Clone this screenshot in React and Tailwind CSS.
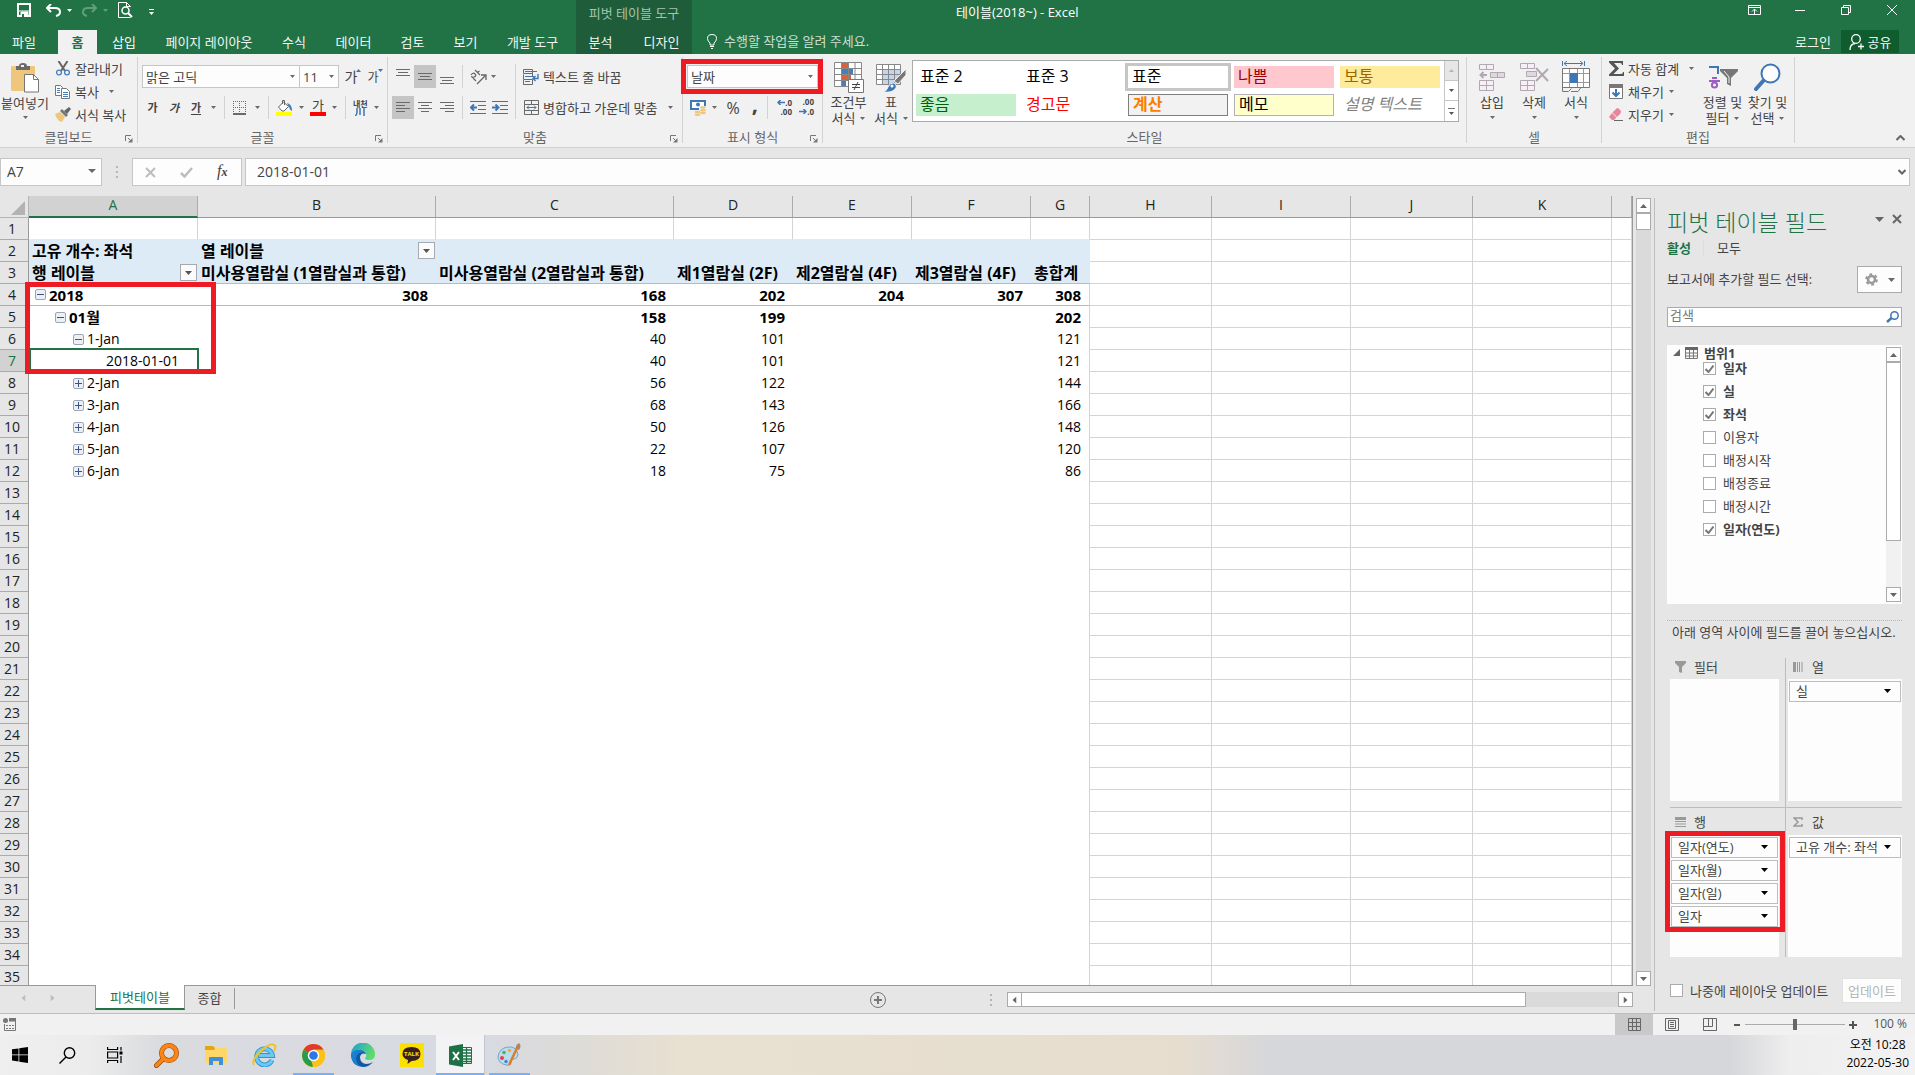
import React from 'react';
import clsx from 'clsx';

const columns = [
  { name: 'A', width: 'w-[169px]' },
  { name: 'B', width: 'w-[238px]' },
  { name: 'C', width: 'w-[238px]' },
  { name: 'D', width: 'w-[119px]' },
  { name: 'E', width: 'w-[119px]' },
  { name: 'F', width: 'w-[119px]' },
  { name: 'G', width: 'w-[59px]' },
  { name: 'H', width: 'w-[122px]' },
  { name: 'I', width: 'w-[139px]' },
  { name: 'J', width: 'w-[122px]' },
  { name: 'K', width: 'w-[139px]' },
  { name: '', width: '' }
];

const pivotRows = {
  4: { label: '2018', sign: '-', pad: 'pl-[6px]', bold: true, values: ['308', '168', '202', '204', '307', '308'] },
  5: { label: '01월', sign: '-', pad: 'pl-[26px]', bold: true, values: ['', '158', '199', '', '', '202'] },
  6: { label: '1-Jan', sign: '-', pad: 'pl-[44px]', values: ['', '40', '101', '', '', '121'] },
  7: { label: '2018-01-01', pad: 'pl-[77px]', values: ['', '40', '101', '', '', '121'] },
  8: { label: '2-Jan', sign: '+', pad: 'pl-[44px]', values: ['', '56', '122', '', '', '144'] },
  9: { label: '3-Jan', sign: '+', pad: 'pl-[44px]', values: ['', '68', '143', '', '', '166'] },
  10: { label: '4-Jan', sign: '+', pad: 'pl-[44px]', values: ['', '50', '126', '', '', '148'] },
  11: { label: '5-Jan', sign: '+', pad: 'pl-[44px]', values: ['', '22', '107', '', '', '120'] },
  12: { label: '6-Jan', sign: '+', pad: 'pl-[44px]', values: ['', '18', '75', '', '', '86'] }
};

const headerCells = {
  2: ['고유 개수: 좌석', '열 레이블', '', '', '', '', ''],
  3: [
    '행 레이블',
    '미사용열람실 (1열람실과 통합)',
    '미사용열람실 (2열람실과 통합)',
    '제1열람실 (2F)',
    '제2열람실 (4F)',
    '제3열람실 (4F)',
    '총합계'
  ]
};

const fields = [
  { name: '일자', checked: true },
  { name: '실', checked: true },
  { name: '좌석', checked: true },
  { name: '이용자', checked: false },
  { name: '배정시작', checked: false },
  { name: '배정종료', checked: false },
  { name: '배정시간', checked: false },
  { name: '일자(연도)', checked: true }
];

const tabs = [
  { name: '삽입', width: 'w-[54px]' },
  { name: '페이지 레이아웃', width: 'w-[116px]' },
  { name: '수식', width: 'w-[54px]' },
  { name: '데이터', width: 'w-[65px]' },
  { name: '검토', width: 'w-[53px]' },
  { name: '보기', width: 'w-[53px]' },
  { name: '개발 도구', width: 'w-[81px]' }
];

const cellStyles = [
  { name: '표준 2', style: 'text-black' },
  { name: '표준 3', style: 'text-black' },
  { name: '표준', style: 'text-black bg-white outline-3 outline-[#c6c6c6]' },
  { name: '나쁨', style: 'text-[#9c0006] bg-[#ffc7ce]' },
  { name: '보통', style: 'text-[#9c6500] bg-[#ffeb9c]' },
  { name: '좋음', style: 'text-[#006100] bg-[#c6efce]' },
  { name: '경고문', style: 'text-[#ff0000]' },
  { name: '계산', style: 'text-[#fa7d00] bg-[#f2f2f2] font-bold border border-[#7f7f7f]' },
  { name: '메모', style: 'text-black bg-[#ffffcc] border border-[#b2b2b2]' },
  { name: '설명 텍스트', style: 'text-[#7f7f7f] italic' }
];

/* ---------- small shared pieces ---------- */

function Caret({ size = 5, className = 'text-[#6a6a6a]' }) {
  return (
    <svg
      width={size}
      height={Math.ceil(size / 2)}
      viewBox="0 0 8 4"
      preserveAspectRatio="none"
      className={clsx('shrink-0', className)}
      fill="currentColor"
    >
      <path d="M0 0h8L4 4z" />
    </svg>
  );
}

function Divider() {
  return <div className="w-px self-stretch bg-[#d2d2d2]" />;
}

function Launcher() {
  return (
    <button aria-label="옵션" className="absolute right-1 bottom-0">
      <svg width="8" height="8" viewBox="0 0 8 8" stroke="#777" fill="none">
        <path d="M.5 6V.5H6M3 3l3 3" />
        <path d="M7.5 3v4.5H3z" fill="#777" stroke="none" />
      </svg>
    </button>
  );
}

function Group({ title, className, launcher, children }) {
  return (
    <section className={clsx('relative flex shrink-0 flex-col border-r border-[#d2d2d2]', className)}>
      <div className="flex h-[74px]">{children}</div>
      <div className="flex h-3 items-center justify-center text-[#666]">{title}</div>
      {launcher && <Launcher />}
    </section>
  );
}

function Combo({ label, value, className }) {
  return (
    <div className={clsx('relative h-[23px]', className)}>
      <select
        aria-label={label}
        className="block h-full w-full appearance-none border border-[#c6c6c6] bg-[#fdfdfd] pl-[3px] leading-5 text-[#444]"
      >
        <option>{value}</option>
      </select>
      <Caret className="pointer-events-none absolute top-[10px] right-[5px] text-[#6a6a6a]" />
    </div>
  );
}

function SmallButton({ icon, label, caret, gap = 'ml-[5px]' }) {
  return (
    <button className="flex h-[23px] items-center">
      <span className="mr-1 flex w-4 justify-center">{icon}</span>
      <span>{label}</span>
      {caret && <Caret className={clsx('text-[#6a6a6a]', gap)} />}
    </button>
  );
}

function BigButton({ icon, lines, className }) {
  return (
    <button className={clsx('flex flex-col items-center pt-[3px]', className)}>
      <span className="flex h-[34px] items-center">{icon}</span>
      <span className="leading-4 whitespace-nowrap">{lines[0]}</span>
      {lines[1] ? (
        <span className="flex items-center gap-[5px] leading-4 whitespace-nowrap">
          {lines[1]}
          <Caret />
        </span>
      ) : (
        <Caret className="mt-[6px] text-[#6a6a6a]" />
      )}
    </button>
  );
}

/* ---------- ribbon icons ---------- */

const PasteIcon = () => (
  <svg width="30" height="32" viewBox="0 0 30 32">
    <path d="M2 5h22q1 0 1 1v23q0 1-1 1H2q-1 0-1-1V6q0-1 1-1z" fill="#eec67c" />
    <path d="M6 9V5h3q0-3 4-3t4 3h3v4z" fill="#6a6a6a" />
    <rect x="11" y="4" width="3" height="2" fill="#f1f1f1" />
    <path d="M14.500 13.500h9l5 5v12.500h-14z" fill="#fff" stroke="#777" />
    <path d="M23.500 13.500v5h5" fill="none" stroke="#777" />
  </svg>
);

const CutIcon = () => (
  <svg width="14" height="15" viewBox="0 0 14 15" fill="none">
    <path d="M2.500 0l6.500 10M11.500 0L5 10" stroke="#666" strokeWidth="2" />
    <circle cx="3" cy="11.500" r="2.400" stroke="#4a7ebb" strokeWidth="1.300" />
    <circle cx="11" cy="11.500" r="2.400" stroke="#4a7ebb" strokeWidth="1.300" />
  </svg>
);

const CopyIcon = () => (
  <svg width="16" height="14" viewBox="0 0 16 14" fill="#fff" stroke="#777">
    <path d="M.5.5h5l2 2v8h-7z" />
    <path d="M6.500 3.500h5l3 3v7h-8z" />
    <path d="M2 3.500h3M2 5.500h3M2 7.500h3M8 7.500h5M8 9.500h5M8 11.500h5" stroke="#4a7ebb" />
  </svg>
);

const BrushIcon = () => (
  <svg width="16" height="15" viewBox="0 0 16 15">
    <path d="M0 7l5-2 5 5-3 5q-5-1-7-8z" fill="#eec67c" />
    <path d="M5 4l2-2 6 6-2 2z" fill="#777" />
    <path d="M9 4l5-4 2 2-4 5z" fill="#666" />
  </svg>
);

function LinesIcon({ rows }) {
  return (
    <svg width="14" height="16" viewBox="0 0 14 16" stroke="#6a6a6a">
      {rows.map(([x1, x2, y]) => (
        <path key={y} d={`M${x1} ${y}.5H${x2}`} />
      ))}
    </svg>
  );
}

const alignRows = {
  top: [[0, 14, 0], [2, 12, 3], [0, 14, 6]],
  middle: [[0, 14, 4], [2, 12, 7], [0, 14, 10]],
  bottom: [[0, 14, 8], [2, 12, 11], [0, 14, 14]],
  left: [[0, 14, 2], [0, 9, 5], [0, 14, 8], [0, 9, 11]],
  center: [[0, 14, 2], [3, 11, 5], [0, 14, 8], [3, 11, 11]],
  right: [[0, 14, 2], [5, 14, 5], [0, 14, 8], [5, 14, 11]]
};

function AlignButton({ kind, active }) {
  return (
    <button
      aria-label={kind}
      className={clsx('flex h-[23px] w-[22px] items-center justify-center', active && 'bg-[#c5c5c5]')}
    >
      <LinesIcon rows={alignRows[kind]} />
    </button>
  );
}

function IndentIcon({ flip }) {
  return (
    <svg width="16" height="14" viewBox="0 0 16 14" fill="none">
      <path d="M0 .5h16M8 4.500h8M8 8.500h8M0 12.500h16" stroke="#6a6a6a" />
      <path d={flip ? 'M0 6.500h6M3.500 3.500l3 3-3 3' : 'M7 6.500H1M4 3.500l-3 3 3 3'} stroke="#3f76b5" strokeWidth="2" />
    </svg>
  );
}

const OrientationIcon = () => (
  <svg width="17" height="16" viewBox="0 0 17 16" fill="none" stroke="#666">
    <path d="M1 6q2-3 4-1t-1 3-2-1M5 1l5 5M7.500 3.500L9.500 2M3 9l3 3" strokeWidth="1.200" />
    <path d="M7 15l8-8M11 6h5v5" strokeWidth="1.300" />
  </svg>
);

const WrapIcon = () => (
  <svg width="16" height="16" viewBox="0 0 16 16" fill="none">
    <path d="M.5.5h9v4h-9zM.5 10V5.500M.5 10.500h9v5h-9zM9.500 7V4" stroke="#6a6a6a" />
    <path d="M2 2.500h12M2 7.500h9M2 12.500h5" stroke="#3f76b5" />
    <path d="M15 5v4.500H10M12.500 7L10 9.500l2.500 2.500" stroke="#3f76b5" strokeWidth="1.400" />
  </svg>
);

const MergeIcon = () => (
  <svg width="15" height="15" viewBox="0 0 15 15" fill="none">
    <path d="M.5.5h14v14H.5zM.5 4.500h14M.5 10.500h14M7.500 0v4M7.500 11v4" stroke="#6a6a6a" />
    <path d="M3 7.500h9M5 5.500l-2 2 2 2M10 5.500l2 2-2 2" stroke="#3f76b5" />
  </svg>
);

const BorderIcon = () => (
  <svg width="14" height="14" viewBox="0 0 14 14" fill="none" stroke="#6a6a6a">
    <path d="M.5 0v12M6.500 0v12M12.500 0v12M0 .5h13M0 6.500h13" strokeDasharray="1 1" />
    <path d="M0 13h13" strokeWidth="2" />
  </svg>
);

const FillIcon = () => (
  <svg width="17" height="17" viewBox="0 0 17 17">
    <path d="M2.500 8l5-5 5 4.500-4.500 4.500h-2z" fill="#fff" stroke="#666" />
    <path d="M6.500 5V1.500h2V6" fill="none" stroke="#666" />
    <path d="M11 4q5 1 5 8-2-1-3-4z" fill="#3f76b5" />
    <path d="M0 13h16v4H0z" fill="#ff0" />
  </svg>
);

const MoneyIcon = () => (
  <svg width="17" height="16" viewBox="0 0 17 16">
    <path d="M1 1h14v8H1z" fill="#fff" stroke="#3f76b5" strokeWidth="2" />
    <circle cx="8" cy="4.500" r="2" fill="#3f76b5" />
    <path d="M9 6h8v10H4v-4h5z" fill="#f1f1f1" />
    <g fill="#eec67c">
      <ellipse cx="13" cy="7.500" rx="3" ry="1.300" />
      <ellipse cx="13" cy="10.200" rx="3" ry="1.300" />
      <ellipse cx="13" cy="13" rx="3" ry="1.300" />
      <ellipse cx="7.500" cy="12" rx="3" ry="1.300" />
      <ellipse cx="7.500" cy="14.700" rx="3" ry="1.300" />
    </g>
  </svg>
);

const ConditionalIcon = () => (
  <svg width="30" height="31" viewBox="0 0 30 31">
    <path d="M.5.500h27v24H.5z" fill="#fff" />
    <path d="M8 1h6v5H8zM8 13h9v5H8z" fill="#d9623b" />
    <path d="M8 7h11v5H8zM8 19h4v5H8z" fill="#4a7ebb" />
    <path d="M.5.500h27v24H.5zM.5 6.500h27M.5 12.500h27M.5 18.500h27M7.500 0v24M14.500 0v24M21 0v24" fill="none" stroke="#888" />
    <path d="M14.500 17.500h15v13h-15z" fill="#fff" stroke="#777" />
    <path d="M18 22.500h8M18 25.500h8M24 20l-4 8" stroke="#444" />
  </svg>
);

const FormatTableIcon = () => (
  <svg width="30" height="29" viewBox="0 0 30 29">
    <path d="M.5 1.500h24v20H.5z" fill="#fff" />
    <path d="M6 6h18v15H6z" fill="#c5d6ec" />
    <path d="M.5 1.500h24v20H.5zM.5 6.500h24M.5 11.500h24M.5 16.500h24M6.500 1v20M12.500 1v20M18.500 1v20" fill="none" stroke="#888" />
    <path d="M30 6v6l-8 9-4-3z" fill="#777" stroke="#f1f1f1" />
    <path d="M7 29q4-1 5-5 2-5 6-4 4 3 1 6-3 4-12 3z" fill="#3f76b5" stroke="#f1f1f1" />
    <circle cx="16" cy="23" r="1.500" fill="#fff" />
  </svg>
);

const InsertCellsIcon = () => (
  <svg width="26" height="27" viewBox="0 0 26 27" fill="#f6eff6" stroke="#b1a8b1">
    <path d="M.5.500h14v5H.5zM7.500.5v5M.5 16.500h14v10H.5zM.5 21.500h14M7.500 16.500v10" />
    <path d="M11.500 8.500h14v5h-14zM18.500 8.500v5" fill="#e0d8e0" />
    <path d="M8 11H2M4.500 8l-3 3 3 3" fill="none" strokeWidth="2" />
  </svg>
);

const DeleteCellsIcon = () => (
  <svg width="29" height="28" viewBox="0 0 29 28" fill="#f6eff6" stroke="#b1a8b1">
    <path d="M.5.500h14v5H.5zM7.500.5v5M.5 17.500h14v10H.5zM.5 22.500h14M7.500 17.500v10" />
    <path d="M6.500 8.500h10v5h-10z" fill="#e0d8e0" />
    <path d="M16 5l12 13M28 6L16 18" fill="none" strokeWidth="2" />
  </svg>
);

const FormatCellsIcon = () => (
  <svg width="28" height="32" viewBox="0 0 28 32">
    <path d="M.5 0v5M22.500 0v5M2 2.500h19M5 0L2 2.500 5 5M18 0l3 2.500L18 5" fill="none" stroke="#3f76b5" />
    <path d="M.5 7.500h27v19H.5z" fill="#fff" stroke="#777" />
    <path d="M1 12.500h26M1 21.500h26M7.500 8v18M15.500 8v18M21.500 8v18" stroke="#999" />
    <path d="M8 12h8v10H8z" fill="#3f76b5" />
    <path d="M.5 26v4.500h6l3-3M9 30.500h7l3-4" fill="none" stroke="#777" />
  </svg>
);

const SortIcon = () => (
  <svg width="30" height="24" viewBox="0 0 30 24" fill="none">
    <path d="M1 2h9v7" stroke="#3f76b5" strokeWidth="2" />
    <path d="M4 13h5M1 16h11" stroke="#9a5fc0" strokeWidth="2" />
    <circle cx="6.500" cy="20" r="2.600" stroke="#9a5fc0" strokeWidth="2" />
    <path d="M12 4h18v2l-7 7v8l-4-2v-6l-7-7z" fill="#777" />
    <path d="M16 6l5 6v6" stroke="#f1f1f1" />
  </svg>
);

const FindIcon = () => (
  <svg width="27" height="28" viewBox="0 0 27 28" fill="none">
    <path d="M2 26L10 17" stroke="#3f76b5" strokeWidth="4" strokeLinecap="round" />
    <circle cx="16.500" cy="10.500" r="9" fill="#fff" stroke="#3f76b5" strokeWidth="2" />
  </svg>
);

const SumIcon = () => (
  <svg width="15" height="15" viewBox="0 0 15 15">
    <path d="M0 0h14v4h-1q0-2-2-2H5l5 5.500L4.500 13H12q2 0 2-2h1v4H0v-1.500l6-6L0 1.500z" fill="#555" />
  </svg>
);

const FillDownIcon = () => (
  <svg width="14" height="15" viewBox="0 0 14 15" fill="none">
    <path d="M.5.500h13v14H.5z" fill="#fff" stroke="#777" />
    <path d="M0 0h14v4H0z" fill="#777" />
    <path d="M7 5v7M3.500 8.500L7 12l3.500-3.500" stroke="#3f76b5" strokeWidth="2" />
  </svg>
);

const EraserIcon = () => (
  <svg width="14" height="13" viewBox="0 0 14 13">
    <path d="M7 1q1-1 2-1l3 3q0 2-1 3L8 9 3.500 4.500z" fill="#e8849b" />
    <path d="M3 5l4.500 4.500L5 12H3L0 9z" fill="#e8849b" />
    <path d="M5 12.500h9" stroke="#666" />
  </svg>
);

/* ---------- title bar and ribbon ---------- */

function TitleBar() {
  return (
    <header className="flex h-[54px] shrink-0 bg-[#217346] text-[#f2f7f4]">
      <div className="w-[576px] shrink-0">
        <div className="flex h-[30px] pt-[2px] pl-[17px]">
          <div className="flex h-4 items-center">
            <button aria-label="저장">
              <svg width="14" height="14" viewBox="0 0 14 14" fill="none" stroke="#fff">
                <path d="M1 1h12v12H1z" strokeWidth="2" />
                <path d="M2 8h10M4 9h7v5H4z" strokeWidth="1" fill="#fff" />
                <path d="M5 11h2v3H5z" fill="#217346" stroke="none" />
              </svg>
            </button>
            <button aria-label="실행 취소" className="ml-[15px] flex items-center gap-[6px]">
              <svg width="15" height="13" viewBox="0 0 15 13" fill="none" stroke="#fff" strokeWidth="2">
                <path d="M5 0L1 4l4 4M1 4h8q5 0 5 4 0 3-4 4" />
              </svg>
              <Caret className="text-white" />
            </button>
            <button aria-label="다시 실행" className="ml-[10px] flex items-center gap-[6px] opacity-30">
              <svg width="15" height="13" viewBox="0 0 15 13" fill="none" stroke="#fff" strokeWidth="2">
                <path d="M10 0l4 4-4 4M14 4H6Q1 4 1 8q0 3 4 4" />
              </svg>
              <Caret className="text-white" />
            </button>
            <button aria-label="인쇄 미리 보기" className="ml-[10px]">
              <svg width="15" height="16" viewBox="0 0 15 16" fill="none" stroke="#fff">
                <path d="M12.500 15.500H.5V.5h8l4 4M8.500.5v4h4" />
                <circle cx="7.500" cy="8.500" r="3.500" strokeWidth="1.500" />
                <path d="M10 11l4 4" strokeWidth="2" />
              </svg>
            </button>
            <button aria-label="빠른 실행 도구 모음" className="mt-1 ml-4 flex flex-col items-center gap-[2px]">
              <span className="h-px w-[5px] bg-white" />
              <Caret className="text-white" />
            </button>
          </div>
        </div>
        <nav className="flex h-6 leading-[22px]">
          <button className="w-[58px] pr-[10px]">파일</button>
          <button className="w-[39px] bg-[#f1f1f1] font-bold text-[#217346]">홈</button>
          {tabs.map((tab) => (
            <button key={tab.name} className={clsx('whitespace-nowrap', tab.width)}>
              {tab.name}
            </button>
          ))}
        </nav>
      </div>

      <div className="w-[116px] shrink-0 bg-[#1e5c3a]">
        <div className="h-[30px] text-center leading-[26px] text-[#a3c5b0]">피벗 테이블 도구</div>
        <nav className="flex h-6 justify-center gap-[31px] leading-[22px]">
          <button>분석</button>
          <button>디자인</button>
        </nav>
      </div>

      <div className="min-w-0 flex-1">
        <div className="flex h-[30px] justify-between">
          <h1 className="pl-[264px] leading-6 text-white">테이블(2018~) - Excel</h1>
          <div className="flex h-5">
            <button aria-label="리본 메뉴 표시 옵션" className="flex w-[46px] items-center justify-center">
              <svg width="13" height="10" viewBox="0 0 13 10" fill="none" stroke="#fff">
                <path d="M.5.500h12v9H.5zM.5 2.500h12M6.500 4v5M4 6.500L6.500 4 9 6.500" />
              </svg>
            </button>
            <button aria-label="최소화" className="flex w-[46px] items-center justify-center">
              <span className="h-px w-[10px] bg-white" />
            </button>
            <button aria-label="이전 크기로 복원" className="flex w-[46px] items-center justify-center">
              <svg width="10" height="10" viewBox="0 0 10 10" fill="none" stroke="#fff">
                <path d="M.5 2.500h7v7h-7zM2.500 2.500v-2h7v7h-2" />
              </svg>
            </button>
            <button aria-label="닫기" className="flex w-[46px] items-center justify-center">
              <svg width="10" height="10" viewBox="0 0 10 10" stroke="#fff">
                <path d="M0 0l10 10M10 0L0 10" />
              </svg>
            </button>
          </div>
        </div>
        <div className="flex h-6 justify-between leading-[22px]">
          <button className="flex items-start gap-[7px] pl-[15px] text-[#c9dfd1]">
            <svg width="10" height="15" viewBox="0 0 10 15" fill="none" stroke="#fff" className="mt-1">
              <path d="M3 11V9Q.5 7 .5 4.500.5.500 5 .500t4.500 4Q9.500 7 7 9v2zM3 12.500h4M4 14.500h2" />
            </svg>
            수행할 작업을 알려 주세요.
          </button>
          <div className="flex pr-4">
            <button className="mr-[10px]">로그인</button>
            <button className="flex h-[23px] w-[58px] items-center justify-center gap-1 bg-[#0f5c2f]">
              <svg width="15" height="16" viewBox="0 0 15 16" fill="none" stroke="#fff" strokeWidth="1.300">
                <circle cx="7" cy="5" r="4.300" />
                <path d="M1 16q0-6 5-6.500M9 12.500h6M12 9.500v6" />
              </svg>
              공유
            </button>
          </div>
        </div>
      </div>
    </header>
  );
}

function Ribbon() {
  return (
    <div className="flex h-[94px] shrink-0 border-b border-[#d2d2d2] bg-[#f1f1f1] pt-[3px] pb-1 text-[#444]">
      <Group title="클립보드" className="w-[138px]" launcher>
        <button className="flex w-[50px] flex-col items-center pt-1">
          <PasteIcon />
          <span className="mt-[2px] leading-4 whitespace-nowrap">붙여넣기</span>
          <Caret className="mt-[5px] text-[#6a6a6a]" />
        </button>
        <div className="pl-[5px]">
          <SmallButton icon={<CutIcon />} label="잘라내기" />
          <SmallButton icon={<CopyIcon />} label="복사" caret gap="ml-[10px]" />
          <SmallButton icon={<BrushIcon />} label="서식 복사" />
        </div>
      </Group>

      <Group title="글꼴" className="w-[250px]" launcher>
        <div className="flex flex-col gap-2 pt-2 pl-1">
          <div className="flex">
            <Combo label="글꼴" value="맑은 고딕" className="w-[158px]" />
            <Combo label="글꼴 크기" value="11" className="-ml-px w-10" />
            <button className="relative ml-1 w-4 text-[14px]">
              가
              <Caret className="absolute top-1 -right-[2px] rotate-180 text-[#3f76b5]" />
            </button>
            <button className="relative ml-[6px] w-4 pt-[2px] text-[12px]">
              가
              <Caret className="absolute top-1 -right-[2px] text-[#3f76b5]" />
            </button>
          </div>
          <div className="flex h-[23px] items-center">
            <button className="w-[21px] text-[11px] font-bold">가</button>
            <button className="w-[22px] text-[11px] font-bold italic">가</button>
            <button className="w-[22px] text-[11px] font-bold underline underline-offset-2">가</button>
            <Caret className="ml-1 text-[#6a6a6a]" />
            <div className="ml-2 h-[23px] w-px bg-[#d2d2d2]" />
            <button className="ml-2 flex items-center gap-2" aria-label="테두리">
              <BorderIcon />
              <Caret />
            </button>
            <div className="ml-2 h-[23px] w-px bg-[#d2d2d2]" />
            <button className="ml-[7px] flex items-center gap-[6px]" aria-label="채우기 색">
              <FillIcon />
              <Caret />
            </button>
            <button className="ml-[6px] flex items-center gap-[6px]">
              <span className="h-[17px] w-4 border-b-4 border-[#ff0000] text-[13px] leading-[13px]">가</span>
              <Caret />
            </button>
            <div className="ml-2 h-[23px] w-px bg-[#d2d2d2]" />
            <button className="ml-[7px] flex items-center gap-[6px]">
              <span className="flex flex-col items-center text-[8px] leading-[8px] font-bold">
                내천
                <svg width="10" height="8" viewBox="0 0 10 8" stroke="#3f76b5" strokeWidth="1.500" fill="none">
                  <path d="M2 0v4q0 3-2 4M5 0v7M9 0v8" />
                </svg>
              </span>
              <Caret />
            </button>
          </div>
        </div>
      </Group>

      <Group title="맞춤" className="w-[295px]" launcher>
        <div className="flex flex-col gap-2 pt-2 pl-1">
          <div className="flex">
            <AlignButton kind="top" />
            <AlignButton kind="middle" active />
            <AlignButton kind="bottom" />
            <div className="ml-1 w-px bg-[#d2d2d2]" />
            <button aria-label="방향" className="ml-[7px] flex items-center gap-1">
              <OrientationIcon />
              <Caret />
            </button>
          </div>
          <div className="flex">
            <AlignButton kind="left" active />
            <AlignButton kind="center" />
            <AlignButton kind="right" />
            <div className="ml-1 w-px bg-[#d2d2d2]" />
            <button aria-label="내어쓰기" className="ml-[7px]">
              <IndentIcon />
            </button>
            <button aria-label="들여쓰기" className="ml-[6px]">
              <IndentIcon flip />
            </button>
          </div>
        </div>
        <div className="mt-[7px] mb-3 ml-[7px] flex">
          <Divider />
        </div>
        <div className="flex flex-col gap-2 pt-2 pl-[7px]">
          <SmallButton icon={<WrapIcon />} label="텍스트 줄 바꿈" />
          <SmallButton icon={<MergeIcon />} label="병합하고 가운데 맞춤" caret gap="ml-[11px]" />
        </div>
      </Group>

      <Group title="표시 형식" className="w-[140px]" launcher>
        <div className="relative flex flex-1 flex-col gap-2 px-1 pt-2">
          <Combo label="표시 형식" value="날짜" className="w-[131px]" />
          <div className="pointer-events-none absolute top-[2px] -left-[2px] h-[35px] w-[142px] border-5 border-[#ed1c24]" />
          <div className="flex h-[23px] items-center pl-[3px]">
            <button aria-label="회계 표시 형식" className="flex items-center gap-[5px]">
              <MoneyIcon />
              <Caret />
            </button>
            <button className="ml-2 w-4 text-[16px]">%</button>
            <button className="ml-2 h-[23px] w-3 pb-2 text-[22px] leading-[15px] font-bold">,</button>
            <div className="ml-[6px] h-[23px] w-px bg-[#d2d2d2]" />
            <button aria-label="자릿수 늘림" className="ml-2 flex w-4 flex-col items-end text-[8px] leading-[11px] font-bold">
              <span className="flex h-[8px] items-center">
                <svg width="8" height="5" viewBox="0 0 8 5" fill="none" stroke="#3f76b5" strokeWidth="1.500">
                  <path d="M8 2.500H1M3.500 0L1 2.500 3.500 5" />
                </svg>
                .0
              </span>
              <span className="h-[11px]">.00</span>
            </button>
            <button aria-label="자릿수 줄임" className="ml-[6px] flex w-4 flex-col items-end text-[8px] leading-[11px] font-bold">
              <span className="h-[8px] leading-[8px]">.00</span>
              <span className="flex h-[11px] items-center">
                <svg width="8" height="5" viewBox="0 0 8 5" fill="none" stroke="#3f76b5" strokeWidth="1.500">
                  <path d="M0 2.500h7M4.500 0L7 2.500 4.500 5" />
                </svg>
                .0
              </span>
            </button>
          </div>
        </div>
      </Group>

      <Group title="스타일" className="w-[644px]">
        <BigButton icon={<ConditionalIcon />} lines={['조건부', '서식']} className="ml-1 w-[43px]" />
        <BigButton icon={<FormatTableIcon />} lines={['표', '서식']} className="w-[42px]" />
        <div className="mt-[3px] flex h-[62px] w-[547px] border border-[#ababab] bg-white">
          <div className="grid flex-1 grid-cols-5 content-start gap-[6px] pt-[5px] pr-1 pl-[3px]">
            {cellStyles.map((item) => (
              <button
                key={item.name}
                className={clsx('flex h-[22px] items-center pb-[2px] pl-1 text-[16px] leading-5 whitespace-nowrap', item.style)}
              >
                {item.name}
              </button>
            ))}
          </div>
          <div className="flex w-[14px] flex-col divide-y divide-[#c6c6c6] border-l border-[#c6c6c6]">
            <button aria-label="위로" className="flex h-5 items-center justify-center bg-[#e6e6e6]">
              <Caret className="rotate-180 text-[#b5b5b5]" />
            </button>
            <button aria-label="아래로" className="flex h-5 items-center justify-center">
              <Caret className="text-[#555]" />
            </button>
            <button aria-label="자세히" className="flex flex-1 flex-col items-center justify-center gap-[3px]">
              <span className="h-px w-[7px] bg-[#777]" />
              <Caret className="text-[#555]" />
            </button>
          </div>
        </div>
      </Group>

      <Group title="셀" className="w-[135px]">
        <BigButton icon={<InsertCellsIcon />} lines={['삽입']} className="ml-1 w-[42px]" />
        <BigButton icon={<DeleteCellsIcon />} lines={['삭제']} className="w-[42px]" />
        <BigButton icon={<FormatCellsIcon />} lines={['서식']} className="w-[42px]" />
      </Group>

      <Group title="편집" className="w-[193px]">
        <div className="w-[98px] pl-[6px]">
          <SmallButton icon={<SumIcon />} label="자동 합계" caret gap="ml-[10px]" />
          <SmallButton icon={<FillDownIcon />} label="채우기" caret />
          <SmallButton icon={<EraserIcon />} label="지우기" caret />
        </div>
        <BigButton icon={<SortIcon />} lines={['정렬 및', '필터']} className="w-[45px]" />
        <BigButton icon={<FindIcon />} lines={['찾기 및', '선택']} className="w-[45px]" />
      </Group>

      <div className="flex flex-1 items-end justify-end pr-[10px] pb-[2px]">
        <button aria-label="리본 메뉴 축소">
          <svg width="9" height="6" viewBox="0 0 9 6" fill="none" stroke="#666" strokeWidth="2">
            <path d="M.5 5l4-4 4 4" />
          </svg>
        </button>
      </div>
    </div>
  );
}

function FormulaBar() {
  return (
    <div className="flex h-[38px] shrink-0 items-end pr-[5px] text-[14px] text-[#444]">
      <div className="relative h-7 w-[102px]">
        <input
          aria-label="이름 상자"
          defaultValue="A7"
          className="block h-full w-full border border-[#c6c6c6] bg-[#fdfdfd] pb-[2px] pl-[6px]"
        />
        <Caret size={8} className="absolute top-[11px] right-[6px] text-[#6a6a6a]" />
      </div>
      <div className="flex h-7 w-[30px] flex-col items-center justify-center gap-[3px]">
        <span className="size-[2px] bg-[#b5b5b5]" />
        <span className="size-[2px] bg-[#b5b5b5]" />
        <span className="size-[2px] bg-[#b5b5b5]" />
      </div>
      <div className="flex h-7 w-[110px] items-center border border-[#c6c6c6] bg-[#fdfdfd]">
        <button aria-label="취소" className="ml-3">
          <svg width="11" height="11" viewBox="0 0 11 11" stroke="#bdbdbd" strokeWidth="2">
            <path d="M1 1l9 9M10 1l-9 9" />
          </svg>
        </button>
        <button aria-label="입력" className="ml-6">
          <svg width="13" height="11" viewBox="0 0 13 11" fill="none" stroke="#bdbdbd" strokeWidth="2.500">
            <path d="M1 6l3.500 3.500L12 1" />
          </svg>
        </button>
        <button className="ml-6 pb-[2px] font-['Liberation_Serif',serif] text-[16px] leading-5 italic">
          f<span className="text-[12px] font-bold">x</span>
        </button>
      </div>
      <div className="relative ml-[3px] h-7 min-w-0 flex-1">
        <input
          aria-label="수식 입력줄"
          defaultValue="2018-01-01"
          className="block h-full w-full border border-[#c6c6c6] bg-[#fdfdfd] pb-[2px] pl-[11px]"
        />
        <svg width="8" height="6" viewBox="0 0 8 6" fill="none" stroke="#666" strokeWidth="2" className="absolute top-[11px] right-1">
          <path d="M.5 1L4 4.500 7.500 1" />
        </svg>
      </div>
    </div>
  );
}

/* ---------- worksheet ---------- */

function FilterButton() {
  return (
    <button
      aria-label="필터"
      className="mr-px flex size-[17px] shrink-0 items-center justify-center border border-[#a6aab0] bg-[#fbfbfc]"
    >
      <Caret size={7} className="text-[#555]" />
    </button>
  );
}

function ExpandButton({ sign }) {
  return (
    <button aria-label={sign === '+' ? '확장' : '축소'} className="mr-[3px] shrink-0">
      <svg width="11" height="11" viewBox="0 0 11 11" fill="none">
        <rect x=".5" y=".5" width="10" height="10" rx="1.500" fill="#eceff4" stroke="#9aa5b8" />
        <path d={sign === '+' ? 'M2 5.500h7M5.500 2v7' : 'M2 5.500h7'} stroke="#3b5484" />
      </svg>
    </button>
  );
}

function SheetCell({ row, col }) {
  const item = pivotRows[row];
  const head = headerCells[row];

  // plain cells right of the pivot table keep their gridlines
  if (col > 6) {
    return <td className="h-[22px] border-r border-b border-[#d4d4d4] p-0" />;
  }
  if (row === 1) {
    return <td className="h-[22px] border-r border-b border-r-[#d4d4d4] border-b-[#ddebf7] p-0" />;
  }
  if (head) {
    return (
      <td
        className={clsx(
          'h-[22px] border-b bg-[#ddebf7] p-0 text-[16px] font-bold text-black',
          row === 3 ? 'border-[#9bc2e6]' : 'border-[#ddebf7]'
        )}
      >
        <div className="flex h-[21px] items-center justify-between pl-[3px] leading-5 whitespace-nowrap">
          {head[col]}
          {((row === 2 && col === 1) || (row === 3 && col === 0)) && <FilterButton />}
        </div>
      </td>
    );
  }

  const border = clsx(
    'h-[22px] p-0',
    row === 4 && 'border-b border-b-[#9bc2e6]',
    col === 6 && 'border-r border-r-[#d4d4d4]'
  );
  if (!item) {
    return <td className={border} />;
  }
  const text = item.bold ? 'text-[15px] font-bold' : 'text-[14px]';
  if (col === 0) {
    return (
      <td className={clsx(border, 'relative text-black')}>
        <div className={clsx('flex h-[21px] items-center leading-5 whitespace-nowrap', text, item.pad)}>
          {item.sign && <ExpandButton sign={item.sign} />}
          {item.label}
        </div>
        {row === 7 && (
          <div className="pointer-events-none absolute -top-[2px] -right-px -bottom-px left-0 border-2 border-[#217346]" />
        )}
        {row === 4 && (
          <div className="pointer-events-none absolute -top-[2px] -left-1 z-10 h-[92px] w-[191px] border-5 border-[#ed1c24]" />
        )}
      </td>
    );
  }
  return (
    <td className={clsx(border, 'pr-2 text-right leading-5 text-black', text)}>{item.values[col - 1]}</td>
  );
}

function Worksheet() {
  const rows = Array.from({ length: 35 }, (_, i) => i + 1);
  return (
    <div className="min-w-0 flex-1 overflow-hidden border-r border-b border-[#999] bg-white">
      <table className="w-full table-fixed border-separate border-spacing-0">
        <colgroup>
          <col className="w-[29px]" />
          {columns.map((col, idx) => (
            <col key={idx} className={col.width} />
          ))}
        </colgroup>
        <thead>
          <tr>
            <th className="h-[22px] border-r border-b border-[#b5b5b5] bg-[#e6e6e6] p-0">
              <svg width="14" height="14" viewBox="0 0 14 14" className="mt-[2px] ml-[11px]">
                <path d="M14 0v14H0z" fill="#b3b3b3" />
              </svg>
            </th>
            {columns.map((col, idx) => (
              <th
                key={idx}
                className={clsx(
                  'h-[22px] border-r p-0 align-top text-[14px] leading-[18px] font-normal',
                  idx === 0
                    ? 'border-b-2 border-r-[#ababab] border-b-[#217346] bg-[#d2d2d2] text-[#217346]'
                    : 'border-b border-r-[#ababab] border-b-[#999] bg-[#e6e6e6] text-[#222]'
                )}
              >
                {col.name}
              </th>
            ))}
          </tr>
        </thead>
        <tbody>
          {rows.map((row) => (
            <tr key={row}>
              <th
                className={clsx(
                  'h-[22px] border-r border-b border-r-[#999] border-b-[#ababab] p-0 pr-1 text-[14px] leading-5 font-normal',
                  row === 7 ? 'bg-[#d2d2d2] text-[#217346]' : 'bg-[#e6e6e6] text-[#222]'
                )}
              >
                {row}
              </th>
              {columns.map((col, idx) => (
                <SheetCell key={idx} row={row} col={idx} />
              ))}
            </tr>
          ))}
        </tbody>
      </table>
    </div>
  );
}

function ScrollButton({ direction, className }) {
  return (
    <button
      aria-label={direction}
      className={clsx('flex size-[15px] shrink-0 items-center justify-center border border-[#ababab] bg-[#fdfdfd]', className)}
    >
      <Caret
        size={7}
        className={clsx(
          'text-[#666]',
          direction === 'up' && 'rotate-180',
          direction === 'left' && 'rotate-90',
          direction === 'right' && '-rotate-90'
        )}
      />
    </button>
  );
}

function SheetTabs() {
  return (
    <div className="flex h-[27px] shrink-0 pr-[21px] text-[#444]">
      <div className="flex w-[95px] items-center gap-[22px] pb-1 pl-[20px]">
        <Caret size={7} className="rotate-90 text-[#bdbdbd]" />
        <Caret size={7} className="-rotate-90 text-[#bdbdbd]" />
      </div>
      <button className="-mt-px h-[25px] w-[90px] border-x border-b-2 border-x-[#999] border-b-[#217346] bg-white text-[#217346]">
        피벗테이블
      </button>
      <button className="mt-[2px] mb-1 w-[50px] border-r border-[#999] pb-[2px]">종합</button>
      <button aria-label="새 시트" className="mr-[104px] ml-auto flex items-center">
        <svg width="16" height="16" viewBox="0 0 16 16" fill="none" stroke="#777">
          <circle cx="8" cy="8" r="7.500" />
          <path d="M8 4v8M4 8h8" strokeWidth="2" />
        </svg>
      </button>
      <div className="mr-[15px] flex flex-col items-center justify-center gap-[3px]">
        <span className="size-[2px] bg-[#b5b5b5]" />
        <span className="size-[2px] bg-[#b5b5b5]" />
        <span className="size-[2px] bg-[#b5b5b5]" />
      </div>
      <div className="mt-[6px] flex h-[15px] w-[626px] bg-[#dadada]">
        <ScrollButton direction="left" />
        <div className="-ml-px w-[505px] border border-[#ababab] bg-white" />
        <ScrollButton direction="right" className="ml-auto" />
      </div>
    </div>
  );
}

/* ---------- pivot field pane ---------- */

function CheckBox({ id, label, checked, bold }) {
  return (
    <div className="flex items-center gap-[7px]">
      <span className="relative flex size-[13px]">
        <input
          id={id}
          type="checkbox"
          defaultChecked={checked}
          className="peer size-[13px] appearance-none border border-[#ababab] bg-white"
        />
        <svg
          width="9"
          height="8"
          viewBox="0 0 9 8"
          fill="none"
          stroke="#777"
          strokeWidth="2"
          className="pointer-events-none absolute top-[3px] left-[2px] hidden peer-checked:block"
        >
          <path d="M.5 4L3.500 7 8.500.5" />
        </svg>
      </span>
      <label htmlFor={id} className={clsx('leading-4 whitespace-nowrap', bold && 'font-bold')}>
        {label}
      </label>
    </div>
  );
}

function Pill({ label }) {
  return (
    <button className="flex h-[21px] w-full items-center justify-between border border-[#bdbdbd] bg-[#fdfdfd] pr-[9px] pb-[2px] pl-[6px] whitespace-nowrap">
      {label}
      <Caret size={7} className="text-black" />
    </button>
  );
}

function Area({ icon, title, items, first, marked }) {
  return (
    <div>
      <div className={clsx('flex items-center gap-2 pl-1', first ? 'h-[21px] pb-1' : 'h-[27px]')}>
        <span className="flex w-3 justify-center">{icon}</span>
        {title}
      </div>
      <div className="relative flex h-[122px] flex-col gap-[2px] bg-[#fdfdfd] px-px pt-[2px]">
        {items.map((item) => (
          <Pill key={item} label={item} />
        ))}
        {marked && (
          <div className="pointer-events-none absolute -top-1 -right-[6px] -left-[5px] h-[101px] border-5 border-[#ed1c24]" />
        )}
      </div>
    </div>
  );
}

const FunnelIcon = () => (
  <svg width="11" height="12" viewBox="0 0 11 12">
    <path d="M0 0h11v2L7 6v6l-3-1V6L0 2z" fill="#999" />
  </svg>
);

const ColumnsIcon = () => (
  <svg width="10" height="10" viewBox="0 0 10 10" stroke="#999">
    <path d="M1.500 0v10" strokeWidth="3" />
    <path d="M4.500 0v10M6.500 0v10M9 0v10" />
  </svg>
);

const RowsIcon = () => (
  <svg width="11" height="10" viewBox="0 0 11 10" stroke="#999">
    <path d="M0 1.500h11" strokeWidth="3" />
    <path d="M0 4.500h11M0 7h11M0 9.500h11" />
  </svg>
);

const SigmaIcon = () => (
  <svg width="10" height="10" viewBox="0 0 10 10" fill="none" stroke="#999" strokeWidth="1.500">
    <path d="M9 3V1H1l4 4-4 4h8V7" />
  </svg>
);

function FieldPane() {
  return (
    <aside className="mt-[2px] mb-[2px] flex w-[261px] shrink-0 flex-col border-l border-[#bdbdbd] pr-[13px] pl-3 text-[#444]">
      <div className="mt-[6px] flex h-9 items-center justify-between">
        <h2 className="text-[23px] font-light whitespace-nowrap text-[#217346]">피벗 테이블 필드</h2>
        <div className="-mt-[6px] flex items-center gap-2">
          <Caret size={9} className="text-[#666]" />
          <button aria-label="닫기">
            <svg width="10" height="10" viewBox="0 0 10 10" stroke="#666" strokeWidth="2">
              <path d="M1 1l8 8M9 1L1 9" />
            </svg>
          </button>
        </div>
      </div>
      <div className="flex h-4 items-center">
        <button className="mr-3 font-bold text-[#217346]">활성</button>
        <div className="h-full w-px bg-[#dedede]" />
        <button className="ml-[13px]">모두</button>
      </div>
      <div className="mt-[10px] flex h-[27px] items-center justify-between">
        <span className="pb-[2px] whitespace-nowrap">보고서에 추가할 필드 선택:</span>
        <button aria-label="도구" className="flex h-full w-[45px] items-center justify-center gap-[10px] border border-[#ababab] bg-[#fdfdfd]">
          <svg width="13" height="13" viewBox="0 0 13 13" fill="none" stroke="#999">
            <circle cx="6.500" cy="6.500" r="3.500" strokeWidth="2.500" />
            <circle cx="6.500" cy="6.500" r="5.300" strokeWidth="2" strokeDasharray="2.800 2.750" />
          </svg>
          <Caret size={7} />
        </button>
      </div>
      <div className="relative mt-[14px] h-5 shrink-0">
        <input
          aria-label="검색"
          placeholder="검색"
          className="block h-full w-full border border-[#ababab] bg-white pb-1 pl-[2px] placeholder:text-[#777]"
        />
        <svg width="13" height="12" viewBox="0 0 13 12" fill="none" stroke="#3f76b5" className="absolute top-1 right-[3px]">
          <circle cx="8.500" cy="4.500" r="3.700" strokeWidth="1.500" />
          <path d="M1 11l4.500-4" strokeWidth="2.500" />
        </svg>
      </div>

      <div className="mt-[18px] flex min-h-0 flex-1 overflow-hidden bg-[#fdfdfd]">
        <div className="flex-1 pl-[6px]">
          <div className="flex h-[15px] items-center font-bold">
            <svg width="7" height="7" viewBox="0 0 7 7">
              <path d="M7 0v7H0z" fill="#666" />
            </svg>
            <svg width="13" height="12" viewBox="0 0 13 12" fill="none" className="mr-[6px] ml-[5px]">
              <path d="M.5.500h12v11H.5zM.5 6h12M.5 9h12M4.500 3v8M8.500 3v8" stroke="#777" />
              <path d="M0 0h13v3H0z" fill="#666" />
            </svg>
            범위1
          </div>
          <div className="flex flex-col gap-[7px] pl-[30px]">
            {fields.map((field, idx) => (
              <CheckBox key={field.name} id={`field-${idx}`} label={field.name} checked={field.checked} bold={field.checked} />
            ))}
          </div>
        </div>
        <div className="my-[2px] mr-px flex w-[15px] flex-col bg-[#f1f1f1]">
          <ScrollButton direction="up" />
          <div className="h-[179px] border border-[#ababab] bg-white" />
          <ScrollButton direction="down" className="mt-auto" />
        </div>
      </div>

      <div className="mt-4 border-t border-dotted border-[#b5b5b5]" />
      <p className="pl-[5px] leading-[22px] whitespace-nowrap">아래 영역 사이에 필드를 끌어 놓으십시오.</p>

      <div className="mt-[15px] flex">
        <div className="w-[119px] shrink-0 border-r border-[#bdbdbd] pl-[3px]">
          <div className="border-b border-[#bdbdbd] pr-[6px] pb-[6px]">
            <Area icon={<FunnelIcon />} title="필터" items={[]} first />
          </div>
          <div className="pr-[6px]">
            <Area icon={<RowsIcon />} title="행" items={['일자(연도)', '일자(월)', '일자(일)', '일자']} marked />
          </div>
        </div>
        <div className="min-w-0 flex-1">
          <div className="border-b border-[#bdbdbd] pb-[6px] pl-[2px]">
            <Area icon={<ColumnsIcon />} title="열" items={['실']} first />
          </div>
          <div className="pl-[2px]">
            <Area icon={<SigmaIcon />} title="값" items={['고유 개수: 좌석']} />
          </div>
        </div>
      </div>

      <div className="mt-[21px] mb-2 flex h-[25px] items-center justify-between pl-[3px]">
        <CheckBox id="defer" label="나중에 레이아웃 업데이트" />
        <button disabled className="h-full w-[60px] border border-[#e1e1e1] bg-[#fdfdfd] text-[#b5b5b5]">
          업데이트
        </button>
      </div>
    </aside>
  );
}

/* ---------- status bar and taskbar ---------- */

function StatusBar() {
  return (
    <footer className="flex h-[22px] shrink-0 items-stretch border-t border-[#bdbdbd] bg-[#f1f1f1] text-[#555]">
      <button aria-label="매크로 기록" className="pl-[3px]">
        <svg width="13" height="13" viewBox="0 0 13 13" fill="none" stroke="#777">
          <path d="M1.500 6v6.500h11V2.500H7M6 3h7" />
          <path d="M6 1.500h7" strokeWidth="3" />
          <path d="M3 7.500h8M3 10.500h8" strokeDasharray="2 1" />
          <circle cx="2.500" cy="2.500" r="2.500" fill="#777" stroke="none" />
        </svg>
      </button>
      <div className="ml-auto flex items-stretch">
        <button aria-label="기본" className="flex w-[38px] items-center justify-center bg-[#c9c9c9]">
          <svg width="13" height="13" viewBox="0 0 13 13" fill="none" stroke="#666">
            <path d="M.5.500h12v12H.5zM.5 4.500h12M.5 8.500h12M4.500 0v13M8.500 0v13" />
          </svg>
        </button>
        <button aria-label="페이지 레이아웃" className="flex w-[38px] items-center justify-center">
          <svg width="14" height="13" viewBox="0 0 14 13" fill="none" stroke="#666">
            <path d="M.5.500h13v12H.5zM3.500 2.500h7v8h-7zM5 4.500h4M5 6.500h4M5 8.500h4" />
          </svg>
        </button>
        <button aria-label="페이지 나누기 미리 보기" className="flex w-[38px] items-center justify-center">
          <svg width="14" height="13" viewBox="0 0 14 13" fill="none" stroke="#666">
            <path d="M.5.500h13v12H.5zM.5 8.500h9M5.500.5v8M9.500.5v8" />
          </svg>
        </button>
        <button aria-label="축소" className="flex w-4 items-center justify-center">
          <span className="h-[2px] w-[6px] bg-[#555]" />
        </button>
        <input
          aria-label="확대/축소"
          type="range"
          min="0"
          max="100"
          defaultValue="50"
          className="my-auto h-3 w-[100px] appearance-none bg-[linear-gradient(#ababab,#ababab)] bg-[length:100%_1px] bg-center bg-no-repeat [&::-webkit-slider-thumb]:h-[11px] [&::-webkit-slider-thumb]:w-1 [&::-webkit-slider-thumb]:appearance-none [&::-webkit-slider-thumb]:bg-[#666]"
        />
        <button aria-label="확대" className="flex w-4 items-center justify-center">
          <svg width="8" height="8" viewBox="0 0 8 8" stroke="#555" strokeWidth="2">
            <path d="M4 0v8M0 4h8" />
          </svg>
        </button>
        <span className="w-[54px] pr-2 text-right text-[12px] leading-5">100 %</span>
      </div>
    </footer>
  );
}

const taskIcons = {
  everything: (
    <svg width="25" height="25" viewBox="0 0 25 25" fill="none">
      <path d="M2.500 22.500L9 16" stroke="#8a4a12" strokeWidth="5" strokeLinecap="round" />
      <circle cx="15" cy="10" r="7.500" stroke="#8a4a12" strokeWidth="5" />
      <path d="M2.500 22.500L9 16" stroke="#ff8412" strokeWidth="3.500" strokeLinecap="round" />
      <circle cx="15" cy="10" r="7.500" stroke="#ff8412" strokeWidth="3.800" />
    </svg>
  ),
  explorer: (
    <svg width="22" height="19" viewBox="0 0 22 19">
      <path d="M0 1q0-1 1-1h7l2 2v3H0z" fill="#e5a50e" />
      <path d="M0 4h9l2-2h10q1 0 1 1v13q0 1-1 1H0z" fill="#ffd768" />
      <path d="M4 19v-7q0-1 1-1h12q1 0 1 1v7h-4v-4H8v4z" fill="#3f8fd9" />
    </svg>
  ),
  ie: (
    <svg width="25" height="24" viewBox="0 0 25 24" fill="none">
      <path d="M20 17A8 8 0 1 1 20.500 12.500H7" stroke="#2f96d0" strokeWidth="4.800" />
      <path d="M20 17A8 8 0 1 1 20.500 12.500H7" stroke="#6cc9f2" strokeWidth="3" />
      <path d="M2 22Q-1 17 9 8T22 2q3 1 0 6" stroke="#f3c22b" strokeWidth="2" />
    </svg>
  ),
  chrome: (
    <svg width="23" height="23" viewBox="0 0 24 24">
      <circle cx="12" cy="12" r="12" fill="#fbc116" />
      <path d="M12 12L1.600 6A12 12 0 0 1 22.400 6z" fill="#df3a2e" />
      <path d="M12 12l-1 11.950A12 12 0 0 1 1.600 6z" fill="#279c4d" />
      <path d="M12 12l10.400-6H12zM12 24l5.500-9-5.500-3-5-1z" fill="#fbc116" />
      <path d="M12 6h10.400A12 12 0 0 1 11.500 24l6-9z" fill="#fbc116" />
      <circle cx="12" cy="12" r="6" fill="#fff" />
      <circle cx="12" cy="12" r="4.500" fill="#2b77e8" />
    </svg>
  ),
  edge: (
    <svg width="24" height="24" viewBox="0 0 24 24">
      <defs>
        <linearGradient id="edgeTop" x1="0" y1="0" x2="1" y2="0.400">
          <stop offset="0" stopColor="#1e9bdc" />
          <stop offset="1" stopColor="#5ddc6c" />
        </linearGradient>
      </defs>
      <path d="M0 12A12 12 0 0 1 24 11q0 6-6 6-4 0-4-2 2-1 1-4-2-4-7-3-6 1-8 4z" fill="url(#edgeTop)" />
      <path d="M0 12q2-5 8-5 5 0 7 4-5-2-6 3 0 6 6 7 4 0 7-2-4 5-10 5Q1 23 0 12z" fill="#0c59a4" />
      <path d="M0 12q2-5 8-5 3 0 5 2-7 0-8 6 0 5 5 8.800Q0 22 0 12z" fill="#1b7fd0" />
    </svg>
  ),
  kakao: (
    <span className="relative flex size-6 items-center justify-center bg-[#fae100]">
      <svg width="19" height="17" viewBox="0 0 19 17" className="absolute top-1">
        <path d="M9.500 0q9 0 9 7t-9 7l-4 3 .5-4Q.5 11 .5 7q0-7 9-7z" fill="#3b1e1e" />
      </svg>
      <span className="relative -mt-[2px] text-[6px] leading-none font-bold text-[#fae100]">TALK</span>
    </span>
  ),
  excel: (
    <svg width="23" height="23" viewBox="0 0 23 23">
      <path d="M12 3.500h10.500v16H12z" fill="#fff" stroke="#1e7145" />
      <path d="M13 6h9M13 9h9M13 12h9M13 15h9M13 17.500h9M17.500 4v15" stroke="#1e7145" strokeWidth="1.300" />
      <path d="M0 2.500L14 0v23L0 20.500z" fill="#1e7145" />
      <path d="M4 8l6 8M10 8l-6 8" stroke="#fff" strokeWidth="2" />
    </svg>
  ),
  paint: (
    <svg width="25" height="24" viewBox="0 0 25 24">
      <path d="M1 14Q2 5 11 4t10 8q-1 4-4 4t-3 3q0 4-5 3-8-2-8-8z" fill="#b9dcf0" stroke="#6ea8cc" />
      <circle cx="5" cy="15" r="2" fill="#e0463c" />
      <circle cx="7" cy="9.500" r="1.800" fill="#56b04d" />
      <circle cx="12.500" cy="7.500" r="1.800" fill="#f0b030" />
      <circle cx="9" cy="18.500" r="1.700" fill="#4a7fd0" />
      <path d="M12 22L20 5" stroke="#e07b28" strokeWidth="2.500" />
      <path d="M19 6q-1-4 3-6 3 3 0 7z" fill="#b88455" />
    </svg>
  )
};

const apps = [
  { id: 'everything' },
  { id: 'explorer' },
  { id: 'ie' },
  { id: 'chrome', open: true },
  { id: 'edge' },
  { id: 'kakao' },
  { id: 'excel', active: true },
  { id: 'paint', open: true }
];

function Taskbar() {
  return (
    <div className="flex h-10 shrink-0 bg-[linear-gradient(90deg,#efefef_0px,#ececec_90px,#dadbde_160px,#d8dae3_480px,#dcdbd9_560px,#e8e0d0_680px,#e6ddcf_1180px,#d6d7da_1270px,#d6d7da_1730px,#eeeeee_1790px,#f2f2f2_1915px)]">
      <button aria-label="시작" className="flex w-[39px] items-center justify-center">
        <svg width="16" height="16" viewBox="0 0 16 16">
          <path d="M0 2.300L6.500 1.400v6.100H0zM7.300 1.300L16 0v7.500H7.300zM0 8.300h6.500v6.200L0 13.600zM7.300 8.300H16V16l-8.700-1.300z" />
        </svg>
      </button>
      <button aria-label="검색" className="flex w-[56px] items-center justify-center">
        <svg width="17" height="17" viewBox="0 0 17 17" fill="none" stroke="#000" strokeWidth="1.400">
          <circle cx="10.500" cy="6" r="5.200" />
          <path d="M7 10L.5 16.500" />
        </svg>
      </button>
      <button aria-label="작업 보기" className="mr-[7px] flex w-10 items-center justify-center">
        <svg width="16" height="16" viewBox="0 0 16 16" fill="none" stroke="#000" strokeWidth="1.200">
          <path d="M.6 0v2.500h10V0M.6 16v-2.500h10V16M.6 5h10v6H.6zM14 0v3.500M14 9v7" />
          <path d="M12.500 4.500h3v3h-3z" fill="#000" stroke="none" />
        </svg>
      </button>
      {apps.map((app) => (
        <button
          key={app.id}
          aria-label={app.id}
          className={clsx(
            'relative flex w-[49px] items-center justify-center',
            app.active && 'border-r border-[#c4c6cc] bg-[#f3f3f5]'
          )}
        >
          {taskIcons[app.id]}
          {(app.open || app.active) && (
            <span className={clsx('absolute bottom-0 h-[2px] bg-[#76b0f5]', app.active ? 'inset-x-0' : 'inset-x-1')} />
          )}
        </button>
      ))}
      <div className="ml-auto flex flex-col items-center pt-px pr-[6px] text-[12px] leading-[18px] text-black">
        <span>오전 10:28</span>
        <span>2022-05-30</span>
      </div>
    </div>
  );
}

export default function App() {
  return (
    <div className="flex h-screen flex-col overflow-hidden bg-[#e6e6e6] font-['Open_Sans','Noto_Sans_CJK_KR',sans-serif] text-[13px] leading-5">
      <TitleBar />
      <Ribbon />
      <FormulaBar />
      <main className="mt-[10px] flex min-h-0 flex-1">
        <div className="flex min-w-0 flex-1 flex-col">
          <div className="flex min-h-0 flex-1">
            <Worksheet />
            <div className="mt-[2px] mr-[3px] ml-[3px] flex w-[15px] shrink-0 flex-col bg-[#dadada]">
              <ScrollButton direction="up" />
              <div className="h-[17px] border border-[#ababab] bg-white" />
              <ScrollButton direction="down" className="mt-auto" />
            </div>
          </div>
          <SheetTabs />
        </div>
        <FieldPane />
      </main>
      <StatusBar />
      <Taskbar />
    </div>
  );
}
